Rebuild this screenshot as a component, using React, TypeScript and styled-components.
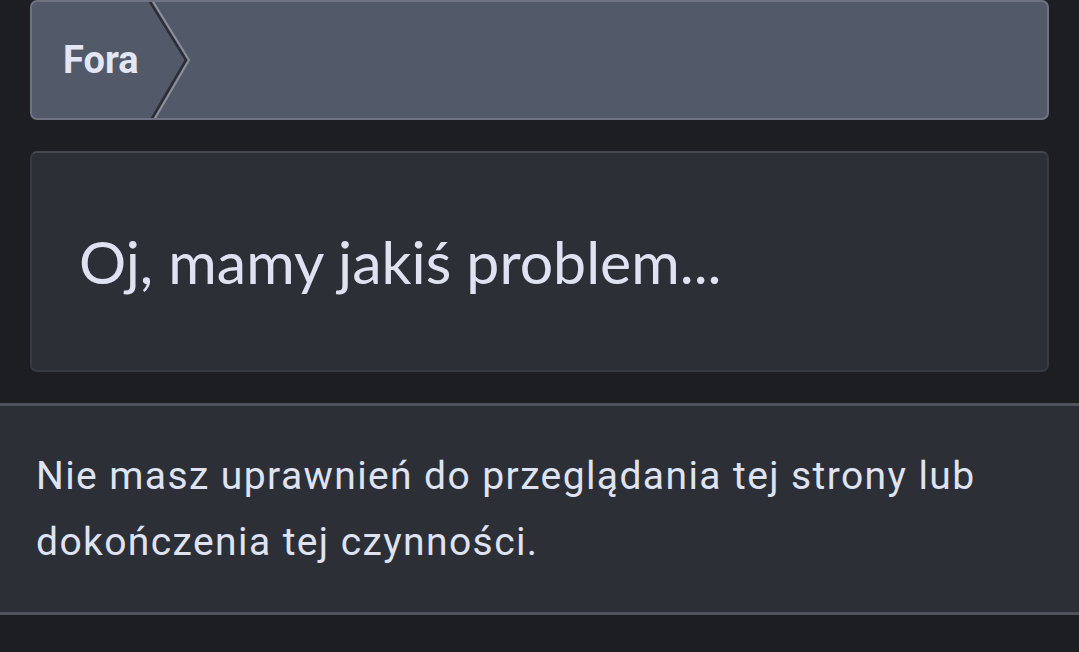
import { createGlobalStyle, styled } from "styled-components";

const GlobalStyle = createGlobalStyle`
  html, body {
    margin: 0;
    padding: 0;
    background: #1d1e21;
  }
  body {
    font-family: Roboto, "Noto Sans", sans-serif;
    color: #dfe3f1;
  }
`;

const Page = styled.div`
  display: flex;
  flex-direction: column;
  min-height: 652px;
  overflow: hidden;
`;

const Inner = styled.div`
  padding: 0 30px;
  display: flex;
  flex-direction: column;
  gap: 31px;
`;

const Breadcrumbs = styled.nav`
  height: 120px;
  box-sizing: border-box;
  background: #525969;
  border: 2px solid #6d7382;
  border-radius: 7px;
  display: flex;
  align-items: stretch;
  overflow: hidden;
`;

const Crumb = styled.a`
  display: flex;
  align-items: center;
  padding-left: 31px;
  font-family: Roboto, sans-serif;
  font-weight: 700;
  font-size: 38px;
  color: #e3e6f4;
  text-decoration: none;
`;

const Chevron = styled.svg`
  display: block;
  width: 50px;
  height: 100%;
  margin-left: 10px;
  flex: none;
`;

const ErrorBox = styled.div`
  height: 221px;
  box-sizing: border-box;
  background: #2d2f37;
  border: 2px solid #373a41;
  border-top-color: #45484e;
  border-radius: 7px;
  display: flex;
  align-items: center;
  padding-left: 47px;
`;

const Title = styled.h1`
  margin: 0;
  font-family: Lato, sans-serif;
  font-weight: 400;
  font-size: 59px;
  color: #dfe3f1;
`;

const Notice = styled.div`
  margin-top: 31px;
  height: 212px;
  box-sizing: border-box;
  background: #2d2f37;
  border-top: 3px solid #4f535c;
  border-bottom: 3px solid #4f535c;
  display: flex;
  align-items: center;
  padding: 0 36px;
`;

const NoticeText = styled.p`
  margin: 0;
  font-family: Roboto, sans-serif;
  font-size: 39px;
  letter-spacing: 1.4px;
  line-height: 66px;
  color: #dfe3f1;
`;

export default function App() {
  return (
    <Page>
      <GlobalStyle />
      <Inner>
        <Breadcrumbs>
          <Crumb href="#">Fora</Crumb>
          <Chevron viewBox="0 0 50 116" preserveAspectRatio="none">
            <polyline points="0,-2 37,58 2,118" fill="none" stroke="#2b2e35" strokeWidth="2.5" />
            <polyline points="3,-2 40,58 5,118" fill="none" stroke="#8b909b" strokeWidth="2" />
          </Chevron>
        </Breadcrumbs>
        <ErrorBox>
          <Title>Oj, mamy jakiś problem...</Title>
        </ErrorBox>
      </Inner>
      <Notice>
        <NoticeText>
          Nie masz uprawnień do przeglądania tej strony lub dokończenia tej czynności.
        </NoticeText>
      </Notice>
    </Page>
  );
}
